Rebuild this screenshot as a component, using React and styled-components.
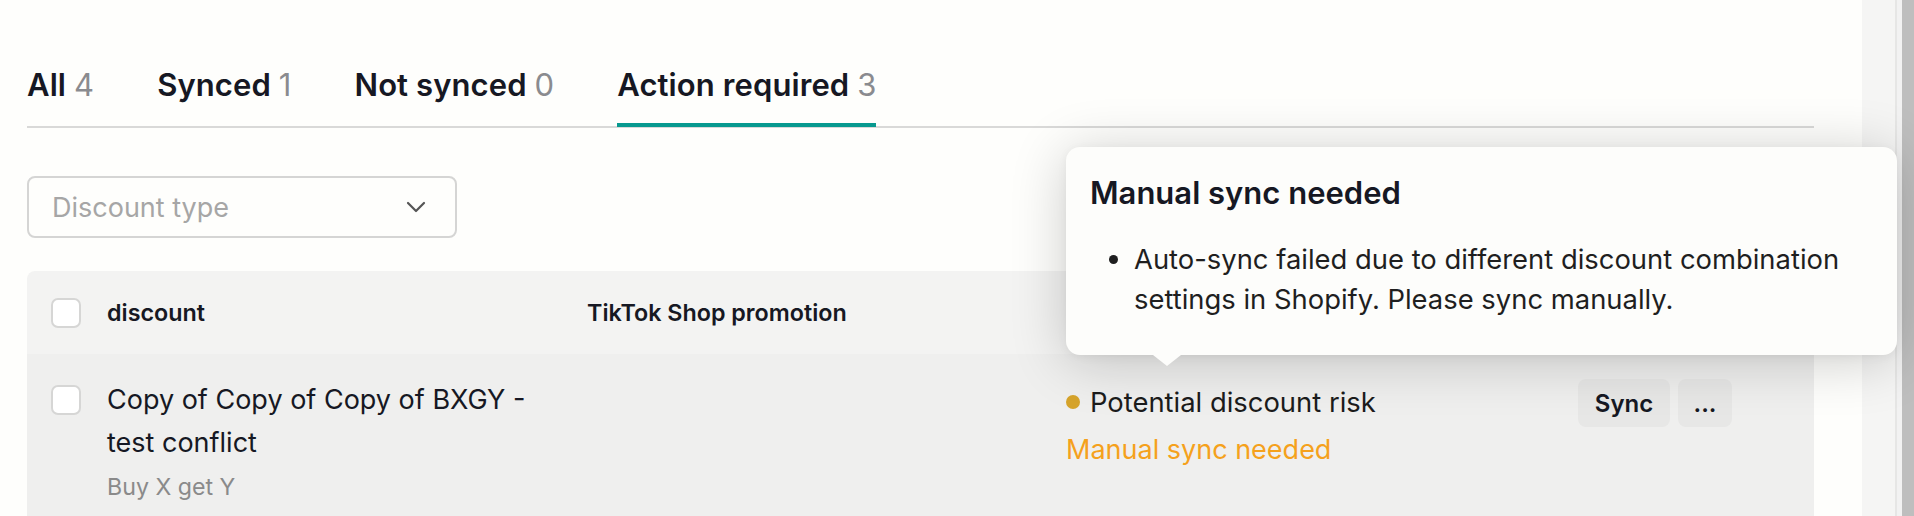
import React from "react";
import styled, { createGlobalStyle } from "styled-components";

const GlobalStyle = createGlobalStyle`
  html, body {
    margin: 0;
    padding: 0;
    background: #fefefc;
    overflow: hidden;
  }
  body {
    font-family: Inter, "Noto Sans", "Liberation Sans", sans-serif;
    color: #161823;
  }
`;

const Page = styled.div`
  display: flex;
  height: 100vh;
  overflow: hidden;
`;

const Main = styled.main`
  flex: 1;
  min-width: 0;
  position: relative;
  padding: 67px 48px 0 27px;
`;

const SideStrip = styled.div`
  width: 52px;
  flex: none;
  display: flex;
`;

const StripPanel = styled.div`
  width: 33px;
  background: #f5f5f4;
  border-right: 2px solid #e6e6e5;
`;

const StripGap = styled.div`
  width: 5px;
  background: #f2f2f2;
`;

const StripThumb = styled.div`
  flex: 1;
  background: #bebebe;
`;

const TabList = styled.div`
  display: flex;
  gap: 63px;
  border-bottom: 2px solid #d9d9d8;
`;

const Tab = styled.button`
  all: unset;
  cursor: pointer;
  font-size: 31px;
  line-height: 36px;
  font-weight: 600;
  letter-spacing: 0.1px;
  color: #161823;
  padding-bottom: 20px;
  margin-bottom: -1px;
  border-bottom: 4px solid ${(p) => (p.$active ? "#07998f" : "transparent")};
`;

const Count = styled.span`
  font-weight: 400;
  color: #8a8b8f;
`;

const Toolbar = styled.div`
  margin-top: 48px;
  display: flex;
`;

const Select = styled.div`
  width: 430px;
  height: 62px;
  box-sizing: border-box;
  border: 2px solid #d5d5d4;
  border-radius: 8px;
  display: flex;
  align-items: center;
  justify-content: space-between;
  padding: 0 29px 0 23px;
  font-size: 27px;
  color: #a6a6a6;
`;

const Table = styled.div`
  margin-top: 33px;
  border-radius: 8px 8px 0 0;
  overflow: hidden;
`;

const Row = styled.div`
  display: grid;
  grid-template-columns: 80px 480px 479px 512px 1fr;
`;

const HeaderRow = styled(Row)`
  height: 83px;
  align-items: center;
  background: #f3f3f2;
  font-size: 23.3px;
  font-weight: 600;
  color: #161823;
`;

const BodyRow = styled(Row)`
  align-items: start;
  background: #efefee;
  padding: 24px 0 24px;
`;

const CheckCell = styled.div`
  padding-left: 24px;
  padding-top: ${(p) => (p.$offset ? "7px" : "0")};
`;

const Checkbox = styled.span`
  display: block;
  width: 30px;
  height: 30px;
  box-sizing: border-box;
  border: 2px solid #d6d6d5;
  border-radius: 7px;
  background: #fff;
`;

const Cell = styled.div`
  padding-right: 24px;
  padding-top: ${(p) => p.$pt || 0}px;
`;

const Name = styled.div`
  font-size: 27px;
  line-height: 43px;
  color: #161823;
`;

const Sub = styled.div`
  margin-top: 5px;
  font-size: 23.2px;
  line-height: 36px;
  color: #8a8a8a;
`;

const StatusLine = styled.div`
  display: flex;
  align-items: center;
  gap: 10px;
  font-size: 27.4px;
  line-height: 44px;
  color: #1c1c1c;
`;

const Dot = styled.span`
  width: 14px;
  height: 14px;
  border-radius: 50%;
  background: #d6a42b;
  flex: none;
`;

const Warning = styled.div`
  margin-top: 4px;
  font-size: 27px;
  line-height: 44px;
  color: #f5a11c;
`;

const Actions = styled.div`
  display: flex;
  gap: 8px;
  margin-top: 1px;
`;

const Button = styled.button`
  all: unset;
  box-sizing: border-box;
  height: 48px;
  width: ${(p) => p.$w}px;
  display: flex;
  align-items: center;
  justify-content: center;
  border-radius: 8px;
  background: #e7e7e6;
  font-family: inherit;
  font-size: 24px;
  font-weight: 600;
  color: #161823;
  cursor: pointer;
`;

const Tooltip = styled.div`
  position: absolute;
  z-index: 10;
  left: 1066px;
  top: 147px;
  width: 831px;
  height: 208px;
  box-sizing: border-box;
  padding: 26px 24px 0 24px;
  background: #fdfdfb;
  border-radius: 14px;
  box-shadow: 0 6px 56px rgba(0, 0, 0, 0.2), 0 2px 10px rgba(0, 0, 0, 0.05);

  &::after {
    content: "";
    position: absolute;
    left: 87px;
    bottom: -11px;
    width: 0;
    height: 0;
    border-left: 14px solid transparent;
    border-right: 14px solid transparent;
    border-top: 11px solid #fdfdfb;
  }
`;

const TipTitle = styled.div`
  font-size: 31px;
  line-height: 40px;
  font-weight: 600;
  color: #161823;
`;

const TipList = styled.ul`
  margin: 26px 0 0;
  padding-left: 44px;
  font-size: 27.4px;
  line-height: 40px;
  color: #1f1f1f;
`;

const Chevron = () => (
  <svg width="20" height="12" viewBox="0 0 20 12" fill="none">
    <path d="M2 2l8 8 8-8" stroke="#555" strokeWidth="2.2" strokeLinecap="round" strokeLinejoin="round" />
  </svg>
);

const tabs = [
  { label: "All", n: 4 },
  { label: "Synced", n: 1 },
  { label: "Not synced", n: 0 },
  { label: "Action required", n: 3, active: true },
];

export default function App() {
  return (
    <>
      <GlobalStyle />
      <Page>
        <Main>
          <TabList>
            {tabs.map((t) => (
              <Tab key={t.label} $active={t.active}>
                {t.label} <Count>{t.n}</Count>
              </Tab>
            ))}
          </TabList>

          <Toolbar>
            <Select>
              <span>Discount type</span>
              <Chevron />
            </Select>
          </Toolbar>

          <Table>
            <HeaderRow>
              <CheckCell>
                <Checkbox />
              </CheckCell>
              <Cell>discount</Cell>
              <Cell>TikTok Shop promotion</Cell>
              <Cell />
              <Cell />
            </HeaderRow>
            <BodyRow>
              <CheckCell $offset>
                <Checkbox />
              </CheckCell>
              <Cell>
                <Name>Copy of Copy of Copy of BXGY - test conflict</Name>
                <Sub>Buy X get Y</Sub>
              </Cell>
              <Cell />
              <Cell $pt={2}>
                <StatusLine>
                  <Dot />
                  Potential discount risk
                </StatusLine>
                <Warning>Manual sync needed</Warning>
              </Cell>
              <Actions>
                <Button $w={92}>Sync</Button>
                <Button $w={54}>...</Button>
              </Actions>
            </BodyRow>
          </Table>

          <Tooltip>
            <TipTitle>Manual sync needed</TipTitle>
            <TipList>
              <li>
                Auto-sync failed due to different discount combination settings in Shopify. Please sync manually.
              </li>
            </TipList>
          </Tooltip>
        </Main>
        <SideStrip>
          <StripPanel />
          <StripGap />
          <StripThumb />
        </SideStrip>
      </Page>
    </>
  );
}
